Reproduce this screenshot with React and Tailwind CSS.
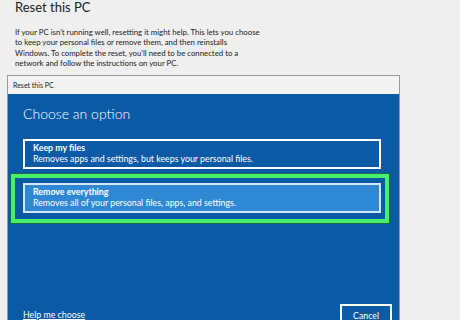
import React from "react";

const font = { fontFamily: 'Lato, "Open Sans", sans-serif' };

function Option({ title, desc, active }) {
  return (
    <div
      className={`h-[30px] w-[358px] flex flex-col justify-center pl-[8px] border-2 ${
        active ? "bg-[#2e88d4] border-[#d6e8f7]" : "bg-[#0a5aa5] border-white"
      } text-white`}
    >
      <div className="text-[8.8px] font-bold leading-[10.5px]">{title}</div>
      <div className="text-[8.8px] leading-[10.5px]">{desc}</div>
    </div>
  );
}

export default function App() {
  return (
    <div className="w-[460px] h-[320px] overflow-hidden bg-[#efefef] text-[#111]" style={font}>
      <div className="pl-[15px]">
        <h1 className="text-[13px] leading-[15px] text-[#222]">Reset this PC</h1>
        <p className="mt-[11.75px] whitespace-nowrap text-[7.8px] leading-[10.5px] text-[#222]">
          If your PC isn't running well, resetting it might help. This lets you choose
          <br />
          to keep your personal files or remove them, and then reinstalls
          <br />
          Windows. To complete the reset, you'll need to be connected to a
          <br />
          network and follow the instructions on your PC.
        </p>
      </div>

      <div className="ml-[7px] mt-[6px] w-[393px] border-t border-x border-[#9a9a9a]">
        <div className="h-[18px] bg-[#f3f3f3] flex items-center pl-[5px] text-[7px] text-[#222]">
          Reset this PC
        </div>
        <div className="bg-[#0a5aa5] h-[240px] pl-[15px] pr-[7px] flex flex-col">
          <div className="pt-[11px] text-[14px] leading-[18px] font-light text-white">
            Choose an option
          </div>
          <div className="mt-[16px]">
            <Option
              title="Keep my files"
              desc="Removes apps and settings, but keeps your personal files."
            />
          </div>
          <div className="mt-[5px] -ml-[12px] w-[378px] border-[4px] border-[#46ef6c] shadow-[0_0_0_1px_#1d6b3c] pt-[5px] pb-[6px] pl-[8px]">
            <Option
              active
              title="Remove everything"
              desc="Removes all of your personal files, apps, and settings."
            />
          </div>
          <div className="mt-[81px] flex items-start justify-between">
            <a className="mt-[5px] text-[8.8px] leading-[11px] text-white underline">Help me choose</a>
            <div className="w-[52px] h-[24px] border-2 border-white flex items-center justify-center text-[8.8px] text-white">
              Cancel
            </div>
          </div>
        </div>
      </div>
    </div>
  );
}
